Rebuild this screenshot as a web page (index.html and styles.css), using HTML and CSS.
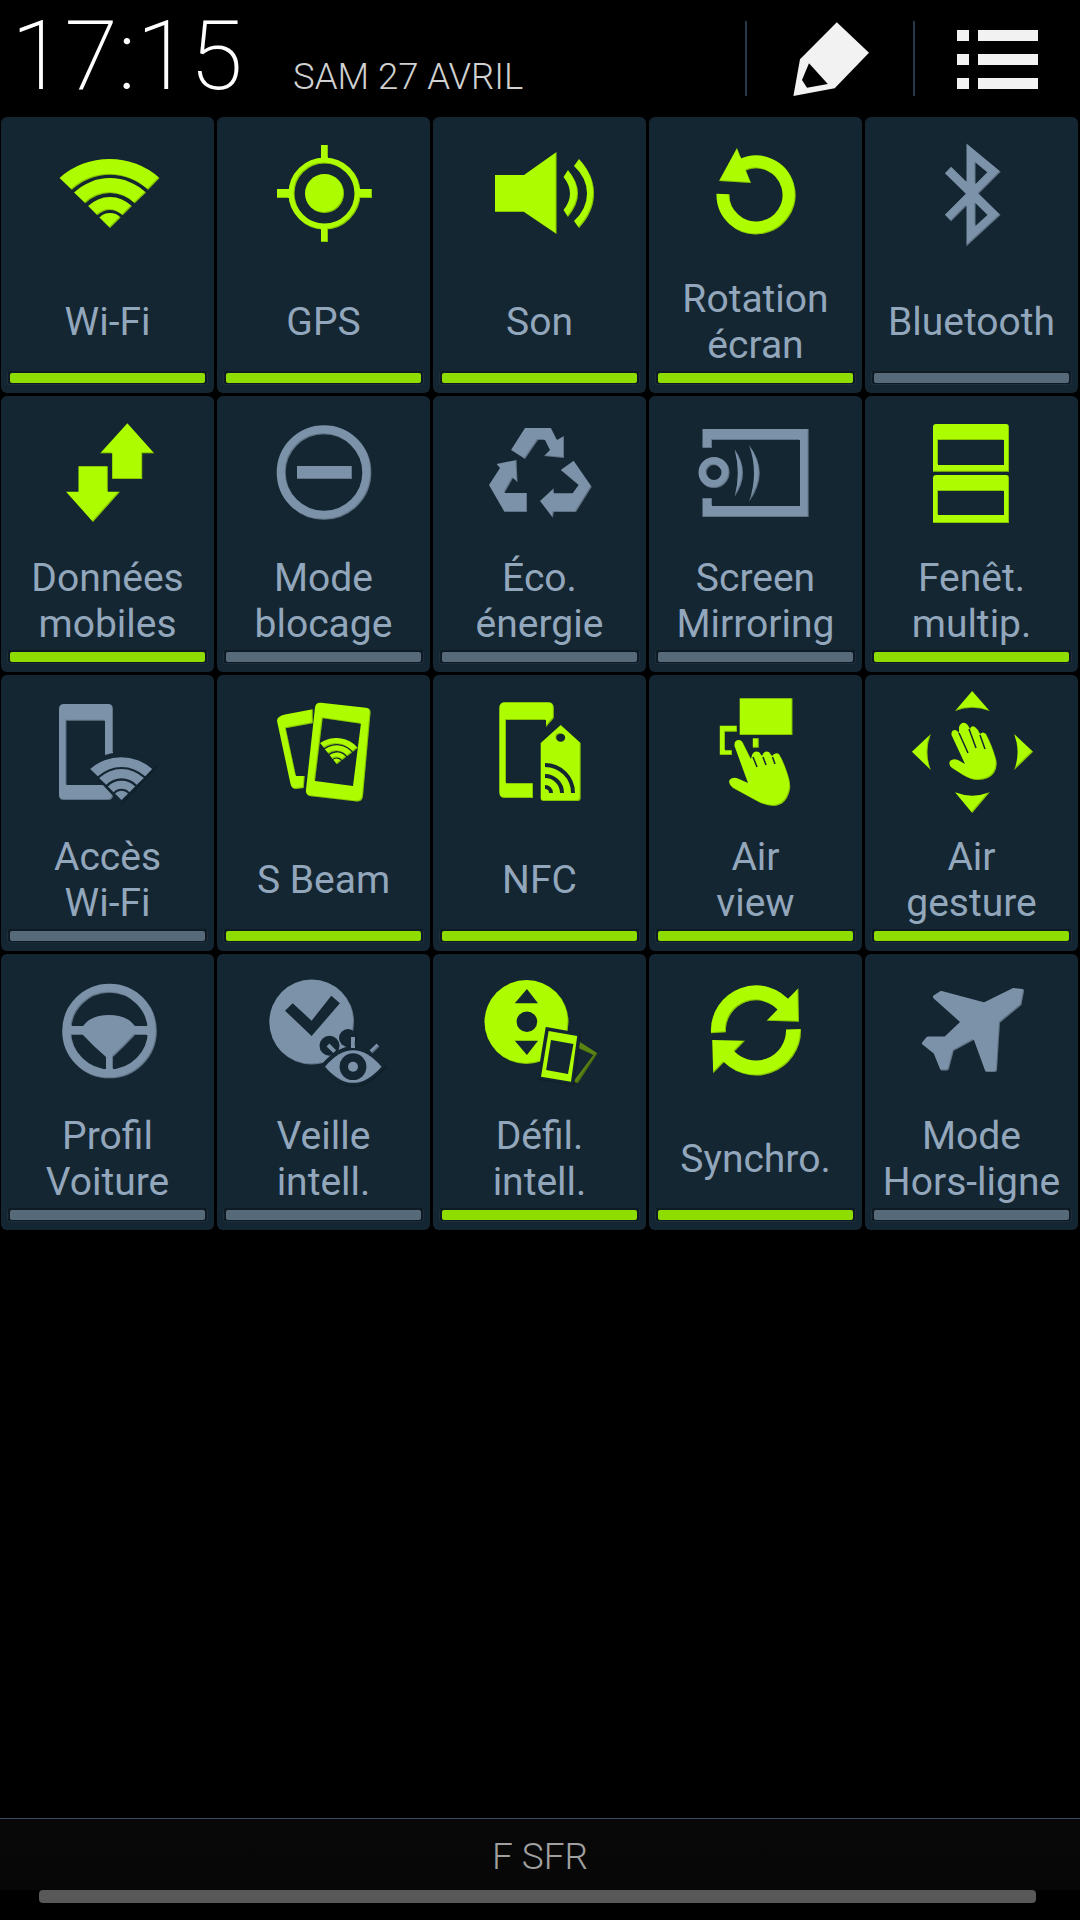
FILE: index.html
```html
<!DOCTYPE html>
<html lang="fr">
<head>
    <meta charset="UTF-8">
    <meta name="viewport" content="width=device-width, initial-scale=1.0">
    <title>Réglages rapides</title>
    <link rel="stylesheet" href="styles.css">
</head>
<body>
    <div class="header">
        <div class="clock">17:15</div>
        <div class="date">SAM 27 AVRIL</div>
        <div class="divider divider-left"></div>
        <svg class="pencil" viewBox="0 0 77 74" aria-hidden="true">
            <path fill-rule="evenodd" d="M44.8 0.3 L77 30.7 L42.7 66.3 L1.4 74 L8 37.3 Z M17 41.3 L10 58 L15 65.7 L35.8 62 Z"/>
        </svg>
        <div class="divider divider-right"></div>
        <div class="menu-icon">
            <span></span><span></span><span></span>
        </div>
    </div>

    <div class="grid">
        <!-- ligne 1 -->
        <div class="tile on">
            <svg class="icon" viewBox="0 0 213 156" aria-hidden="true">
                <defs>
                    <!-- ombre interne en bas à droite des icônes -->
                    <filter id="bevel" color-interpolation-filters="sRGB">
                        <feOffset in="SourceAlpha" dx="-1" dy="-1" result="moved"/>
                        <feComposite in="SourceAlpha" in2="moved" operator="out" result="edge"/>
                        <feFlood flood-color="#000" flood-opacity=".22"/>
                        <feComposite in2="edge" operator="in" result="shade"/>
                        <feMerge>
                            <feMergeNode in="SourceGraphic"/>
                            <feMergeNode in="shade"/>
                        </feMerge>
                    </filter>
                    <g id="wifi-fan">
                        <path d="M58.5 61 A75 75 0 0 1 158.5 61 L147.2 72.8 A56 56 0 0 0 70.8 72.8 Z"/>
                        <path d="M73 75.6 A52 52 0 0 1 145 75.6 L133.7 86.3 A35 35 0 0 0 84.3 86.3 Z"/>
                        <path d="M87.1 89.1 A31 31 0 0 1 130.9 89.1 L121.7 98.3 A18 18 0 0 0 96.3 98.3 Z"/>
                        <path d="M98.4 100.4 A15 15 0 0 1 119.6 100.4 L109 111 Z"/>
                    </g>
                </defs>
                <use href="#wifi-fan"/>
            </svg>
            <div class="label">Wi-Fi</div>
            <div class="bar"><div class="bar-fill"></div></div>
        </div>
        <div class="tile on">
            <svg class="icon" viewBox="0 0 213 156" aria-hidden="true">
                <circle class="line" cx="107.5" cy="76.5" r="33" stroke-width="6"/>
                <circle cx="107.5" cy="76.5" r="19.5"/>
                <rect x="60" y="72" width="14" height="9"/>
                <rect x="141" y="72" width="14" height="9"/>
                <rect x="104" y="28" width="7" height="14"/>
                <rect x="104" y="111" width="7" height="14"/>
            </svg>
            <div class="label">GPS</div>
            <div class="bar"><div class="bar-fill"></div></div>
        </div>
        <div class="tile on">
            <svg class="icon" viewBox="0 0 213 156" aria-hidden="true">
                <path d="M62 58 H91 L123.5 35 V117 L91 95 H62 Z"/>
                <path d="M130.5 60 L135 53 Q145 65 145 76.5 Q145 88 135 100 L130.5 93 Q137 85 137 76.5 Q137 68 130.5 60 Z"/>
                <path d="M141 49 L146 42 Q161 58 161 76.5 Q161 95 146 111 L141 104 Q154 92 154 76.5 Q154 61 141 49 Z"/>
            </svg>
            <div class="label">Son</div>
            <div class="bar"><div class="bar-fill"></div></div>
        </div>
        <div class="tile on">
            <svg class="icon" viewBox="0 0 213 156" aria-hidden="true">
                <path class="line" stroke-width="13" d="M74 77 A33 33 0 1 0 93 48"/>
                <path d="M88 31 L70 64 L102 66 Z"/>
            </svg>
            <div class="label">Rotation<br>écran</div>
            <div class="bar"><div class="bar-fill"></div></div>
        </div>
        <div class="tile">
            <svg class="icon" viewBox="0 0 213 156" aria-hidden="true">
                <path class="line" stroke-width="9" d="M83 53 L129 98 L106 119 V36 L129 55 L83 101"/>
            </svg>
            <div class="label">Bluetooth</div>
            <div class="bar"><div class="bar-fill"></div></div>
        </div>

        <!-- ligne 2 -->
        <div class="tile on">
            <svg class="icon" viewBox="0 0 213 156" aria-hidden="true">
                <path d="M126.4 27.3 L153.2 57.3 H141.2 V83 H111.2 V57.3 H99.2 Z"/>
                <path d="M77.5 70.3 H106.8 V95.7 H119 L92 126 L65 95.7 H77.5 Z"/>
            </svg>
            <div class="label">Données<br>mobiles</div>
            <div class="bar"><div class="bar-fill"></div></div>
        </div>
        <div class="tile">
            <svg class="icon" viewBox="0 0 213 156" aria-hidden="true">
                <circle class="line" cx="107" cy="76.5" r="42.8" stroke-width="9"/>
                <rect x="80" y="70" width="55" height="13"/>
            </svg>
            <div class="label">Mode<br>blocage</div>
            <div class="bar"><div class="bar-fill"></div></div>
        </div>
        <div class="tile">
            <svg class="icon" viewBox="0 0 213 156" aria-hidden="true">
                <path d="M78 54 L92 32 H118 L124 44 L131 40 V62 L111 60 L117 54 L112 44 H105 L92 63 Z"/>
                <path d="M63.6 68 L83.5 64 L84.5 86.3 L80 82 L71.5 97 H94 V116 H71.5 L56 89 L67 72 Z"/>
                <path d="M127.7 74 L140.7 64.7 L158.7 90.7 L143 116 H120.8 L119.8 121.7 L107 105 L120.8 92.3 V97.3 H139.7 L145.6 89 Z"/>
            </svg>
            <div class="label">Éco.<br>énergie</div>
            <div class="bar"><div class="bar-fill"></div></div>
        </div>
        <div class="tile">
            <svg class="icon" viewBox="0 0 213 156" aria-hidden="true">
                <path d="M53.5 33 H159.6 V121 H53.5 V102.3 H63 V110 H151 V44 H63 V52 H53.5 Z"/>
                <circle class="line" cx="65" cy="76.5" r="11.5" stroke-width="8"/>
                <path d="M85.6 53.3 Q102.4 77 85.6 100.7 Q92 77 85.6 53.3 Z"/>
                <path d="M100 49 Q121.4 77 100 105.7 Q110 77 100 49 Z"/>
            </svg>
            <div class="label">Screen<br>Mirroring</div>
            <div class="bar"><div class="bar-fill"></div></div>
        </div>
        <div class="tile on">
            <svg class="icon" viewBox="0 0 213 156" aria-hidden="true">
                <path fill-rule="evenodd" d="M71 28 H141 Q144 28 144 31 V75.7 H68 V31 Q68 28 71 28 Z M73 44 V69 H139 V44 Z"/>
                <path fill-rule="evenodd" d="M71 79 H141 Q144 79 144 82 V127 H68 V82 Q68 79 71 79 Z M73 95 V119 H139 V95 Z"/>
            </svg>
            <div class="label">Fenêt.<br>multip.</div>
            <div class="bar"><div class="bar-fill"></div></div>
        </div>

        <!-- ligne 3 -->
        <div class="tile">
            <svg class="icon" viewBox="0 0 213 156" aria-hidden="true">
                <path fill-rule="evenodd" d="M63 29 H107 Q112 29 112 34 V120 Q112 125 107 125 H63 Q58 125 58 120 V34 Q58 29 63 29 Z M65.4 45.7 V110 H104 V45.7 Z"/>
                <path class="cut-fill" d="M85 92 A50 50 0 0 1 156 92 L120.5 130 Z"/>
                <use href="#wifi-fan" transform="translate(120.5 125) scale(.62) translate(-109 -111)"/>
            </svg>
            <div class="label">Accès<br>Wi-Fi</div>
            <div class="bar"><div class="bar-fill"></div></div>
        </div>
        <div class="tile on">
            <svg class="icon" viewBox="0 0 213 156" aria-hidden="true">
                <path d="M95.7 34.3 L68 39.5 Q59 41.5 60.2 46.7 L73.3 108 Q74.5 114 79 114 L86.7 113 L87.7 101 H79 L68.8 53.3 L95.7 48.3 Z"/>
                <path fill-rule="evenodd" d="M104 27.8 L149 32.8 Q154 33.5 153.5 38 L146 121 Q145.5 127 140 126.4 L94 121.3 Q88.4 120.5 89 115 L98 32.5 Q98.6 27.2 104 27.8 Z M105.7 43.3 L98 106 L136 111 L143.9 48.7 Z"/>
                <use href="#wifi-fan" transform="translate(119.8 89.3) rotate(7) scale(.38) translate(-109 -111)"/>
            </svg>
            <div class="label">S Beam</div>
            <div class="bar"><div class="bar-fill"></div></div>
        </div>
        <div class="tile on">
            <svg class="icon" viewBox="0 0 213 156" aria-hidden="true">
                <path d="M72 27.3 H115 Q120.8 27.3 120.8 33 V43 L113 52 V45 H73 V108.3 H100 V123 H72 Q66.3 123 66.3 117 V33 Q66.3 27.3 72 27.3 Z"/>
                <path fill-rule="evenodd" d="M127.7 50 L147.6 68 V123 Q147.6 126 144.6 126 H110.7 Q107.7 126 107.7 123 V68 Z M127.7 58.7 A4.5 4 0 1 0 127.7 66.7 A4.5 4 0 1 0 127.7 58.7 Z"/>
                <path class="cut" stroke-width="4" d="M112 90 A28 28 0 0 1 140 118 M112 101 A17 17 0 0 1 129 118 M112 112 A6 6 0 0 1 118 118"/>
            </svg>
            <div class="label">NFC</div>
            <div class="bar"><div class="bar-fill"></div></div>
        </div>
        <div class="tile on">
            <svg class="icon" viewBox="0 0 213 156" aria-hidden="true">
                <rect x="90.7" y="23.3" width="52.7" height="36.7"/>
                <path d="M70.8 50.7 H88 V56.7 H76 V75.3 H83 V80 H70.8 Z"/>
                <rect x="103.8" y="63.3" width="5.9" height="9.4"/>
                <path d="M85.5 71 Q85 65 90 65 Q93 65 95 70 L102 84 L103 80 Q105 75 110 77 L113 81 Q115 75 120 77 L123 81 Q126 77 130 79 Q134 85 138 97 Q142 108 141 114 Q138 130 125 131 Q116 131 106 125 L84 113 Q79 109 80.5 105 Q84 101 90 104 L99 108 Z"/>
                <path class="cut" stroke-width="1.5" d="M104 82 L108 92 M114 82 L117 90 M123.5 82 L126 89"/>
            </svg>
            <div class="label">Air<br>view</div>
            <div class="bar"><div class="bar-fill"></div></div>
        </div>
        <div class="tile on">
            <svg class="icon" viewBox="0 0 213 156" aria-hidden="true">
                <path d="M107.2 16 L124.7 36 Q107.2 29.5 90 36 Z"/>
                <path d="M107.2 138 L124.7 117.3 Q107.2 124 90 117.3 Z"/>
                <path d="M46.9 76.7 L65.8 59 Q59 77 65.8 95 Z"/>
                <path d="M168.1 76.7 L149.2 59 Q156 77 149.2 95 Z"/>
                <path d="M86.5 60 Q86 55 90 55 Q92 55 94 58 L94 52 Q96 47 100 48 Q103 49 105 54 Q106 50 110 52 Q113 54 115 59 Q118 56 121 59 Q127 70 131 84 Q133 92 129 98 Q124 105 113 105 Q106 105 98 100 L87 93 Q83 90 85 86 Q88 83 93 85 L100 89 Z"/>
                <path class="cut" stroke-width="1.5" d="M94 58 L103 78 M104 54 L111 73 M115 60 L120 74"/>
            </svg>
            <div class="label">Air<br>gesture</div>
            <div class="bar"><div class="bar-fill"></div></div>
        </div>

        <!-- ligne 4 -->
        <div class="tile">
            <svg class="icon" viewBox="0 0 213 156" aria-hidden="true">
                <circle class="line" cx="108.5" cy="77" r="42.8" stroke-width="9"/>
                <path d="M82 72 Q90 61 108 61 Q126 61 134 72 H147 V81 H134 Q124 92 112 103 V120 H105 V103 Q92 92 82 81 H70 V72 Z"/>
            </svg>
            <div class="label">Profil<br>Voiture</div>
            <div class="bar"><div class="bar-fill"></div></div>
        </div>
        <div class="tile">
            <svg class="icon" viewBox="0 0 213 156" aria-hidden="true">
                <circle cx="94.7" cy="68" r="42.4"/>
                <path class="cut-fill" d="M68 56.7 L75.7 49.3 L94.6 66.7 L114.3 41.7 L122.9 49.3 L94.6 82 Z"/>
                <circle class="cut-fill" cx="112.5" cy="91.7" r="10"/>
                <circle class="cut-fill" cx="131" cy="84" r="9"/>
                <path class="cut-fill cut" stroke-width="8" d="M108 112.7 Q136 80 164.5 112.7 Q136 145 108 112.7 Z"/>
                <path d="M108 112.7 Q136 80 164.5 112.7 Q136 145 108 112.7 Z"/>
                <circle class="cut-fill" cx="136" cy="112.7" r="13.4"/>
                <circle cx="136" cy="112.7" r="5"/>
                <path class="line" stroke-width="4" d="M111 91 L117.7 97.7 M136 83 V94 M161 91 L154 97.7"/>
            </svg>
            <div class="label">Veille<br>intell.</div>
            <div class="bar"><div class="bar-fill"></div></div>
        </div>
        <div class="tile on">
            <svg class="icon" viewBox="0 0 213 156" aria-hidden="true">
                <circle cx="93.5" cy="68" r="42"/>
                <path class="cut-fill" d="M93.9 35 L105 49.3 H81.8 Z"/>
                <circle class="cut-fill" cx="93.9" cy="67.7" r="10.3"/>
                <path class="cut-fill" d="M93.9 101 L105 86.7 H81.8 Z"/>
                <path class="ghost" d="M146.6 87.7 L164.5 99.3 L144.9 129.3 L140.7 127.7 L143 124 L160.4 101 L145.6 94.3 Z"/>
                <path class="cut-fill cut" stroke-width="7" d="M115.6 77 L144.2 82 L138 127.7 L108 122.7 Z"/>
                <path fill-rule="evenodd" d="M115.6 77 L144.2 82 L138 127.7 L108 122.7 Z M118 86 L113.2 116 L135 120 L140.4 90 Z"/>
            </svg>
            <div class="label">Défil.<br>intell.</div>
            <div class="bar"><div class="bar-fill"></div></div>
        </div>
        <div class="tile on">
            <svg class="icon" viewBox="0 0 213 156" aria-hidden="true">
                <path class="line" stroke-width="15" d="M69.5 78.7 A37.5 37.5 0 0 1 137 54"/>
                <path d="M149.3 34.3 L150 67.7 L117.6 66.7 Z"/>
                <path class="line" stroke-width="15" d="M144.5 75.3 A37.5 37.5 0 0 1 77 99"/>
                <path d="M64.2 119.3 L63.2 86 L96 86.7 Z"/>
            </svg>
            <div class="label">Synchro.</div>
            <div class="bar"><div class="bar-fill"></div></div>
        </div>
        <div class="tile">
            <svg class="icon" viewBox="0 0 213 156" aria-hidden="true">
                <path class="plane" d="M157 37 L148.5 36 L119.2 50.5 L76.2 39 L70 43 L98 68 L80.6 84.5 L63 84.5 L59 89.3 L70.5 98.5 L77 114.5 L82 114.5 L87 95.5 L110 83 L122 116 L130 116 L133 67.7 L154.5 50 Z"/>
            </svg>
            <div class="label">Mode<br>Hors-ligne</div>
            <div class="bar"><div class="bar-fill"></div></div>
        </div>
    </div>

    <div class="footer">
        <div class="carrier">F SFR</div>
        <div class="scroll-handle"></div>
    </div>
</body>
</html>
```
FILE: styles.css
```css
* {
    margin: 0;
    padding: 0;
    box-sizing: border-box;
}

body {
    font-family: Roboto, 'Noto Sans', sans-serif;
    background: #000;
    width: 1080px;
    height: 1920px;
    display: flex;
    flex-direction: column;
    overflow: hidden;
}

.header {
    height: 117px;
    display: flex;
    align-items: flex-start;
    flex-shrink: 0;
}

.clock {
    margin: 8px 0 0 11px;
    font-size: 97px;
    line-height: 96px;
    font-weight: 200;
    color: #fff;
}

.date {
    margin: 57px 0 0 50px;
    font-size: 36.5px;
    line-height: 40px;
    font-weight: 300;
    color: #d0d0d0;
}

.divider {
    width: 2px;
    height: 75px;
    margin-top: 21px;
    background: #26384a;
}

.divider-left {
    margin-left: auto;
}

.pencil {
    width: 77px;
    height: 74px;
    margin: 22px 0 0 45px;
    fill: #f2f2f2;
}

.divider-right {
    margin-left: 44px;
}

.menu-icon {
    margin: 30px 42px 0 42px;
    display: flex;
    flex-direction: column;
    gap: 13px;
}

.menu-icon span {
    display: block;
    width: 81px;
    height: 11px;
    background: linear-gradient(to right, #f2f2f2 12px, transparent 12px, transparent 21px, #f2f2f2 21px);
}

.grid {
    display: grid;
    grid-template-columns: repeat(5, 213px);
    grid-auto-rows: 276px;
    gap: 3px;
    padding-left: 1px;
}

.tile {
    display: flex;
    flex-direction: column;
    background: #142632;
    border-radius: 6px;
    color: #7b92a9;
    padding-bottom: 8px;
}

.tile.on {
    color: #aefc00;
}

.icon {
    display: block;
    width: 213px;
    height: 156px;
    flex-shrink: 0;
    fill: currentColor;
    filter: url(#bevel);
}

.line {
    fill: none;
    stroke: currentColor;
}

.cut {
    fill: none;
    stroke: #142632;
}

.cut-fill {
    fill: #142632;
}

.ghost {
    fill: #5a8412;
}

.plane {
    stroke: currentColor;
    stroke-width: 4;
    stroke-linejoin: round;
}

.label {
    flex: 1;
    display: flex;
    align-items: center;
    justify-content: center;
    text-align: center;
    font-size: 39px;
    line-height: 46px;
    color: #93a7bc;
}

.bar {
    height: 14px;
    margin: 0 6px;
    padding: 1px 2px;
    background: #0e1b25;
    border: 1px solid #1e2e3c;
    border-top-color: #0e1b25;
    border-radius: 3px;
}

.bar-fill {
    height: 10px;
    border-radius: 2px;
    background: #566a7a;
}

.tile.on .bar-fill {
    background: #8fdc00;
}

.footer {
    margin-top: auto;
    height: 102px;
    flex-shrink: 0;
    border-top: 1px solid #3c4c5e;
    display: flex;
    flex-direction: column;
    align-items: center;
    background: linear-gradient(to bottom, #080808 0, #070707 71px, #000 71px);
}

.carrier {
    margin-top: 18px;
    font-size: 37px;
    line-height: 40px;
    font-weight: 300;
    color: #a0a0a0;
}

.scroll-handle {
    width: 997px;
    height: 13px;
    margin: 13px 5px 0 0;
    background: #585858;
    border-radius: 4px;
}
```
